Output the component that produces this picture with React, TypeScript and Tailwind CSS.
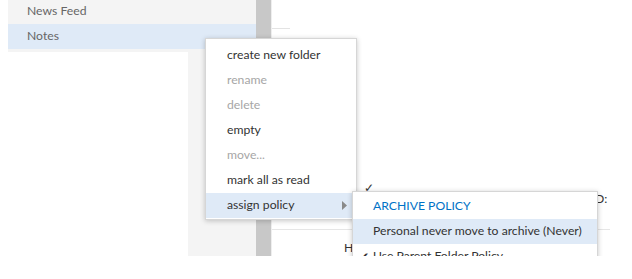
import React from 'react';

const MENU_ITEMS = [
  { label: 'create new folder', disabled: false },
  { label: 'rename', disabled: true },
  { label: 'delete', disabled: true },
  { label: 'empty', disabled: false },
  { label: 'move...', disabled: true },
  { label: 'mark all as read', disabled: false },
];

export default function App() {
  return (
    <div
      className="w-[632px] h-[279px] bg-white overflow-hidden text-[12.2px] whitespace-nowrap"
      style={{ fontFamily: 'Lato, "Open Sans", sans-serif' }}
    >
      <div className="relative h-[256px] overflow-hidden flex pl-[8px]">
        {/* Folder pane */}
        <div className="w-[248px] bg-[#f4f4f4] flex flex-col">
          <div className="h-[24px] flex items-center pl-[19px] text-[#666666] leading-none">
            <span className="-mt-[2px]">News Feed</span>
          </div>
          <div className="h-[25px] flex items-center pl-[19px] bg-[#dfeaf7] text-[#666666]">
            Notes
          </div>
          <div className="h-[3px]" />
          <div className="w-[180px] flex-1 bg-white" />
        </div>

        {/* Scrollbar */}
        <div className="w-[15px] bg-[#c8c8c8]" />

        {/* Reading pane */}
        <div className="relative flex-1 bg-white border-l border-[#eeeeee]">
          <div className="mt-[28px] w-[18px] h-px bg-[#e3e3e3]" />
          <div className="absolute left-0 top-[229px] w-[338px] h-px bg-[#e6e6e6]" />
          <span className="absolute left-[92px] top-[179px] text-[#333333]">✓</span>
          <span className="absolute left-[323px] top-[190px] text-[#333333]">D:</span>
          <span className="absolute left-[72px] top-[239px] text-[#333333]">H</span>
        </div>

        {/* Context menu */}
        <div className="absolute left-[205px] top-[38px] w-[152px] bg-white border border-[#d6d6d6] shadow-[0_1px_5px_rgba(0,0,0,0.22)] pt-[4px] pb-[1px]">
          {MENU_ITEMS.map((item) => (
            <div
              key={item.label}
              className={`h-[25px] flex items-center pl-[21px] ${item.disabled ? 'text-[#a6a6a6]' : 'text-[#333333]'}`}
            >
              {item.label}
            </div>
          ))}
          <div className="h-[25px] flex items-center justify-between pl-[21px] pr-[9px] bg-[#dfeaf7] text-[#333333]">
            <span>assign policy</span>
            <svg width="5" height="9" viewBox="0 0 5 9">
              <path d="M0 0 L5 4.5 L0 9 Z" fill="#8a8a8a" />
            </svg>
          </div>
        </div>

        {/* Policy submenu */}
        <div className="absolute left-[352px] top-[191px] w-[246px] bg-white border border-[#d6d6d6] shadow-[0_1px_5px_rgba(0,0,0,0.22)] pt-[2px]">
          <div className="h-[25px] flex items-center pl-[20px] text-[#0072c6]">ARCHIVE POLICY</div>
          <div className="h-[25px] flex items-center pl-[20px] bg-[#dfeaf7] text-[#333333]">
            Personal never move to archive (Never)
          </div>
          <div className="h-[25px] flex items-center pl-[6px] text-[#333333]">
            <span className="w-[14px] text-[12px]">✔</span>
            <span>Use Parent Folder Policy</span>
          </div>
        </div>
      </div>
    </div>
  );
}
